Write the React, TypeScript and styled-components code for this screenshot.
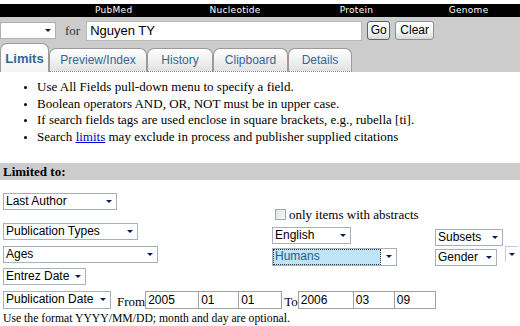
import styled, { createGlobalStyle } from "styled-components";

const GlobalStyle = createGlobalStyle`
  html, body {
    margin: 0;
    padding: 0;
    background: #ffffff;
    overflow: hidden;
  }
  body {
    font-family: "Liberation Serif", "Times New Roman", serif;
  }
`;

const Page = styled.div`
  width: 520px;
  height: 326px;
  padding-top: 4px;
  box-sizing: border-box;
`;

const DbBar = styled.div`
  display: flex;
  height: 13px;
  background: #000000;
  padding-left: 53px;
`;

const DbLink = styled.div<{ $w: number }>`
  width: ${(p) => p.$w}px;
  text-align: center;
  color: #ffffff;
  font-family: "DejaVu Sans", sans-serif;
  font-size: 9px;
  line-height: 13px;
  letter-spacing: 0.3px;
`;

const SearchArea = styled.div`
  background: #cccccc;
  padding-top: 3px;
`;

const SearchRow = styled.div`
  display: flex;
  align-items: center;
  height: 21px;
`;

const ForLabel = styled.span`
  margin: 0 6px 0 9px;
  font-size: 13px;
  color: #333333;
`;

const QueryInput = styled.div`
  width: 271px;
  height: 18px;
  background: #ffffff;
  border: 1px solid #b8b8b8;
  font-family: "Liberation Sans", Arial, sans-serif;
  font-size: 13px;
  line-height: 18px;
  padding-left: 3px;
  box-sizing: content-box;
  color: #000000;
`;

const Button = styled.div<{ $w: number; $dark?: boolean }>`
  width: ${(p) => p.$w}px;
  height: 19px;
  margin-left: 5px;
  box-sizing: border-box;
  border: 1px solid ${(p) => (p.$dark ? "#4a6584" : "#8a9099")};
  border-radius: 3px;
  background: linear-gradient(#ffffff, #f4f4f2 60%, #d8d8d4);
  font-family: "Liberation Sans", Arial, sans-serif;
  font-size: 12px;
  line-height: 17px;
  text-align: center;
  color: #000000;
`;

const Tabs = styled.div`
  display: flex;
  align-items: flex-end;
  height: 29px;
  margin-top: 2px;
`;

const Tab = styled.div<{ $w: number; $active?: boolean }>`
  width: ${(p) => p.$w}px;
  height: ${(p) => (p.$active ? 29 : 24)}px;
  box-sizing: border-box;
  border: 1px solid #9a9a9a;
  border-bottom: ${(p) => (p.$active ? "none" : "1px dotted #888888")};
  border-radius: 7px 7px 0 0;
  background: ${(p) =>
    p.$active
      ? "linear-gradient(#ffffff, #f4f4f4)"
      : "linear-gradient(#ffffff, #eeeeee 60%, #e2e2e2)"};
  color: #336699;
  font-family: "Liberation Sans", Arial, sans-serif;
  font-size: ${(p) => (p.$active ? 13 : 12)}px;
  font-weight: ${(p) => (p.$active ? "bold" : "normal")};
  text-align: center;
  line-height: ${(p) => (p.$active ? 30 : 22)}px;
`;

const Tips = styled.ul`
  margin: 7px 0 0 0;
  padding-left: 37px;
  font-size: 13px;
  line-height: 16.7px;
  color: #000000;
  li::marker {
    font-size: 10px;
  }
`;

const TipLink = styled.a`
  color: #0000cc;
  text-decoration: underline;
`;

const SectionBar = styled.div`
  margin-top: 17px;
  height: 17px;
  background: #cccccc;
  padding-left: 3px;
  font-size: 13px;
  font-weight: bold;
  line-height: 18px;
`;

const Limits = styled.div`
  display: flex;
  padding: 13px 0 0 3px;
`;

const Column = styled.div<{ $w?: number; $top?: number }>`
  display: flex;
  flex-direction: column;
  align-items: flex-start;
  width: ${(p) => (p.$w ? `${p.$w}px` : "auto")};
  padding-top: ${(p) => p.$top || 0}px;
`;

const Dropdown = styled.div<{ $w: number; $mt?: number; $h?: number }>`
  display: flex;
  width: ${(p) => p.$w}px;
  height: ${(p) => p.$h || 17}px;
  margin-top: ${(p) => p.$mt || 0}px;
  box-sizing: border-box;
  border: 1px solid #a8b0bd;
  background: #ffffff;
  font-family: "Liberation Sans", Arial, sans-serif;
  font-size: 12px;
  color: #000000;
  flex-shrink: 0;
`;

const DropLabel = styled.div<{ $selected?: boolean }>`
  flex: 1;
  padding-left: 2px;
  line-height: 15px;
  white-space: nowrap;
  overflow: hidden;
  background: ${(p) => (p.$selected ? "#bde4f7" : "transparent")};
  color: ${(p) => (p.$selected ? "#2a5a8a" : "#000000")};
  outline: ${(p) => (p.$selected ? "1px dotted #333333" : "none")};
  outline-offset: -1px;
`;

const Arrow = styled.div`
  width: 15px;
  display: flex;
  align-items: center;
  justify-content: center;
  &::after {
    content: "";
    border-left: 3px solid transparent;
    border-right: 3px solid transparent;
    border-top: 3px solid #0a1a5c;
  }
`;

const LoneArrow = styled(Arrow)`
  height: 16px;
  width: 13px;
  margin: -3px 0 0 8px;
  border-top: 1px solid #c8ccd4;
  border-left: 1px solid #c8ccd4;
  box-sizing: border-box;
`;

const CheckRow = styled.label`
  display: flex;
  align-items: center;
  gap: 3px;
  height: 12px;
  padding-left: 3px;
  font-size: 13px;
  color: #000000;
`;

const CheckBox = styled.span`
  width: 11px;
  height: 11px;
  box-sizing: border-box;
  border: 1px solid #a0a8b4;
  background: linear-gradient(135deg, #e4e4e0, #f6f6f4);
`;

const Row = styled.div<{ $mt?: number }>`
  display: flex;
  align-items: flex-start;
  margin-top: ${(p) => p.$mt || 0}px;
`;

const DateRow = styled.div`
  display: flex;
  align-items: center;
  margin: 6px 0 0 3px;
  height: 18px;
`;

const DateWord = styled.span<{ $ml: number }>`
  margin-left: ${(p) => p.$ml}px;
  font-size: 13px;
  line-height: 18px;
  padding-top: 4px;
`;

const DateBox = styled.div<{ $w: number }>`
  width: ${(p) => p.$w}px;
  height: 18px;
  box-sizing: border-box;
  border: 1px solid #a0a0a0;
  margin-right: -1px;
  padding-left: 2px;
  background: #ffffff;
  font-family: "Liberation Sans", Arial, sans-serif;
  font-size: 12px;
  line-height: 16px;
`;

const Hint = styled.div`
  margin: 3px 0 0 3px;
  font-size: 11.7px;
  line-height: 13px;
`;

function Select({
  w,
  label,
  mt,
  h,
  selected,
}: {
  w: number;
  label: string;
  mt?: number;
  h?: number;
  selected?: boolean;
}) {
  return (
    <Dropdown $w={w} $mt={mt} $h={h}>
      <DropLabel $selected={selected}>{label}</DropLabel>
      <Arrow />
    </Dropdown>
  );
}

const dbs = [
  { name: "PubMed", w: 124 },
  { name: "Nucleotide", w: 124 },
  { name: "Protein", w: 124 },
  { name: "Genome", w: 105 },
];

const tabs = [
  { name: "Limits", w: 49, active: true },
  { name: "Preview/Index", w: 98 },
  { name: "History", w: 66 },
  { name: "Clipboard", w: 75 },
  { name: "Details", w: 64 },
];

export default function App() {
  return (
    <Page>
      <GlobalStyle />
      <DbBar>
        {dbs.map((db) => (
          <DbLink key={db.name} $w={db.w}>
            {db.name}
          </DbLink>
        ))}
      </DbBar>

      <SearchArea>
        <SearchRow>
          <Select w={56} label="" h={17} />
          <ForLabel>for</ForLabel>
          <QueryInput>Nguyen TY</QueryInput>
          <Button $w={23} $dark>
            Go
          </Button>
          <Button $w={39}>Clear</Button>
        </SearchRow>
        <Tabs>
          {tabs.map((t) => (
            <Tab key={t.name} $w={t.w} $active={t.active}>
              {t.name}
            </Tab>
          ))}
        </Tabs>
      </SearchArea>

      <Tips>
        <li>Use All Fields pull-down menu to specify a field.</li>
        <li>Boolean operators AND, OR, NOT must be in upper case.</li>
        <li>If search fields tags are used enclose in square brackets, e.g., rubella [ti].</li>
        <li>
          Search <TipLink href="#">limits</TipLink> may exclude in process and publisher supplied
          citations
        </li>
      </Tips>

      <SectionBar>Limited to:</SectionBar>

      <Limits>
        <Column $w={269}>
          <Select w={114} label="Last Author" />
          <Select w={135} label="Publication Types" mt={13} />
          <Select w={155} label="Ages" mt={6} />
          <Select w={83} label="Entrez Date" mt={5} />
        </Column>
        <Column $w={163} $top={16}>
          <CheckRow>
            <CheckBox />
            only items with abstracts
          </CheckRow>
          <Select w={79} label="English" mt={6} />
          <Select w={125} label="Humans" mt={4} h={18} selected />
        </Column>
        <Column $top={36}>
          <Select w={68} label="Subsets" />
          <Row $mt={3}>
            <Select w={62} label="Gender" />
            <LoneArrow />
          </Row>
        </Column>
      </Limits>

      <DateRow>
        <Select w={108} label="Publication Date" h={18} />
        <DateWord $ml={6}>From</DateWord>
        <DateBox $w={54}>2005</DateBox>
        <DateBox $w={41}>01</DateBox>
        <DateBox $w={44}>01</DateBox>
        <DateWord $ml={3}>To</DateWord>
        <DateBox $w={56}>2006</DateBox>
        <DateBox $w={42}>03</DateBox>
        <DateBox $w={42}>09</DateBox>
      </DateRow>
      <Hint>Use the format YYYY/MM/DD; month and day are optional.</Hint>
    </Page>
  );
}
